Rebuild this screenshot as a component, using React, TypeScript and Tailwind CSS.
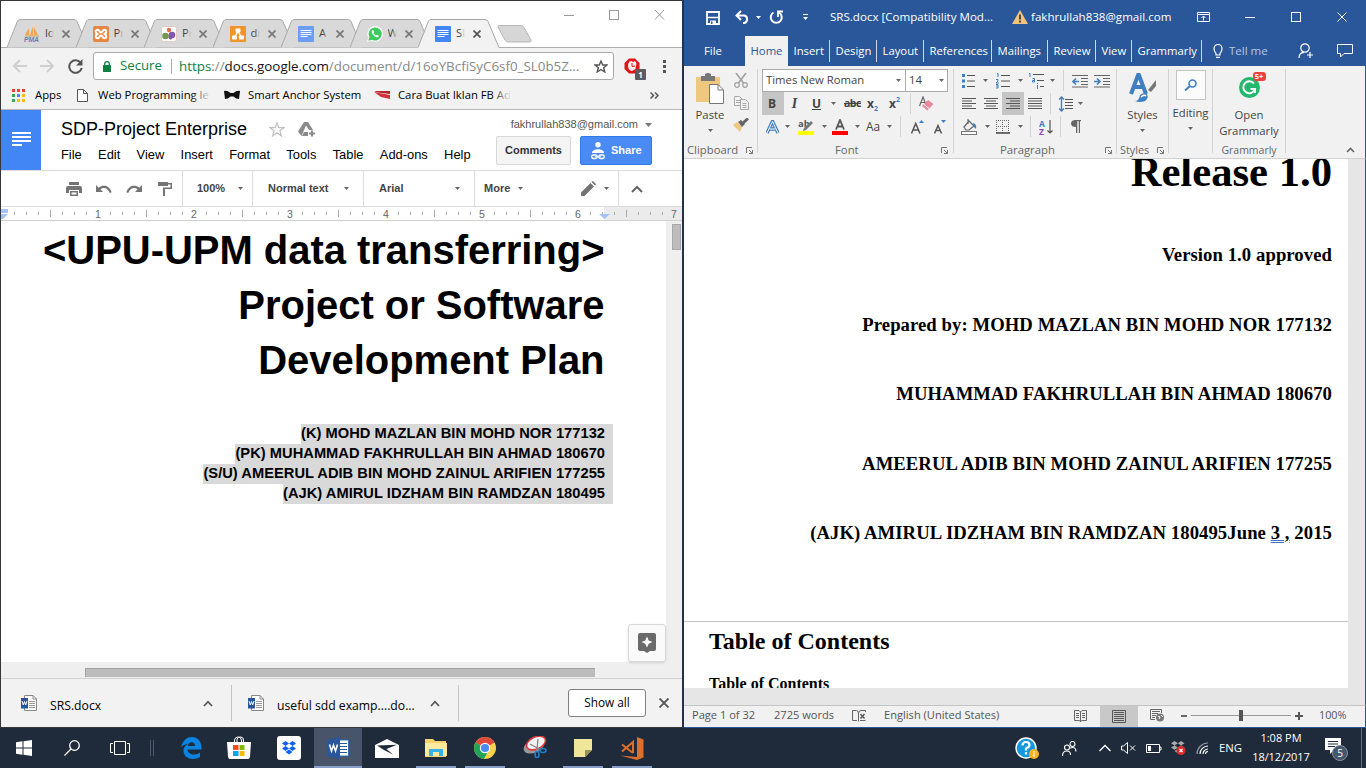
import React from "react";

type IconProps = { w: number; h: number; className?: string; children: React.ReactNode };

function Icon({ w, h, className = "", children }: IconProps) {
  return (
    <svg width={w} height={h} viewBox={`0 0 ${w} ${h}`} fill="none" className={`shrink-0 ${className}`}>
      {children}
    </svg>
  );
}

function Caret({ className = "", color = "#666" }: { className?: string; color?: string }) {
  return (
    <Icon w={5} h={3} className={className}>
      <path d="M0 0H5L2.5 3Z" fill={color} />
    </Icon>
  );
}

/* ---------- Chrome ---------- */

function DocsGlyph({ faded = false }: { faded?: boolean }) {
  return (
    <Icon w={16} h={16}>
      <rect width="16" height="16" rx="1" fill={faded ? "#6b9df5" : "#4285f4"} />
      <path d="M2.500 4.500h11M2.500 6.500h11M2.500 8.500h11M2.500 10.500h7" stroke="#fff" strokeWidth="1" />
    </Icon>
  );
}

const tabs = [
  {
    title: "lo",
    icon: (
      <Icon w={16} h={16}>
        <path d="M5 9V2L1 9ZM9 10V0L6 9ZM10 9V1l4 8Z" fill="#f3a44c" />
        <path d="M1 10h14" stroke="#c9a06c" />
        <text x="0" y="15.500" fontSize="6.500" fontWeight="bold" fontStyle="italic" fontFamily="Liberation Sans" fill="#6c78af" textLength="15" lengthAdjust="spacingAndGlyphs">PMA</text>
      </Icon>
    ),
  },
  {
    title: "Pr",
    icon: (
      <Icon w={16} h={16}>
        <rect width="16" height="16" rx="2" fill="#e58642" />
        <path d="M5.500 8C2 8 2 3.800 4.500 3.800C7 3.800 6 6.500 8 6.500C10 6.500 9 3.800 11.500 3.800C14 3.800 14 8 10.500 8C14 8 14 12.200 11.500 12.200C9 12.200 10 9.500 8 9.500C6 9.500 7 12.200 4.500 12.200C2 12.200 2 8 5.500 8Z" stroke="#fff" strokeWidth="2" />
      </Icon>
    ),
  },
  {
    title: "Pr",
    icon: (
      <Icon w={16} h={16}>
        <rect x="0.500" y="0.500" width="15" height="15" rx="2" fill="#fff" stroke="#e8c8c0" />
        <circle cx="8" cy="4" r="2.200" fill="#e66d4b" />
        <circle cx="4.500" cy="10" r="3.300" fill="#6d9a4f" />
        <circle cx="11" cy="9" r="3.300" fill="#8058a8" />
        <circle cx="9.500" cy="11.500" r="2" fill="#8058a8" />
      </Icon>
    ),
  },
  {
    title: "dr",
    icon: (
      <Icon w={16} h={16}>
        <rect width="16" height="16" rx="1" fill="#f0952c" />
        <path d="M8 5L4.500 11.500M8 5l3.500 6.500" stroke="#fff" strokeWidth="1.500" />
        <rect x="5.500" y="2.500" width="5" height="4" rx="1" fill="#fff" />
        <rect x="2" y="9.500" width="5" height="4" rx="1" fill="#fff" />
        <rect x="9" y="9.500" width="5" height="4" rx="1" fill="#fff" />
      </Icon>
    ),
  },
  { title: "A", icon: <DocsGlyph faded /> },
  {
    title: "W",
    icon: (
      <Icon w={16} h={16}>
        <path d="M0 16L1.300 11.500A7.800 7.800 0 1 1 4.600 14.800Z" fill="#fff" />
        <path d="M1.300 14.700L2.400 11A6.500 6.500 0 1 1 5 13.700Z" fill="#3ec95f" />
        <path d="M5.500 4C4 5 5 8 7 9.800C9 11.500 11.300 12 12 10L10 8.800L9 9.600C8 9.200 7 8.200 6.500 7L7.200 6.200L6.500 4.200Z" fill="#fff" />
      </Icon>
    ),
  },
  { title: "SD", icon: <DocsGlyph />, active: true },
];

function BrowserTab({ tab }: { tab: (typeof tabs)[number] & { active?: boolean } }) {
  const fill = tab.active ? "#f2f2f2" : "#d9d9d9";
  return (
    <div className={`relative mr-[-12.5px] flex h-[29px] w-[81px] items-center ${tab.active ? "z-10" : ""}`}>
      <svg className="absolute inset-0" width="81" height="29" viewBox="0 0 81 29">
        <path d="M0 28.500L10.500 2Q11.500 0.500 13 0.500H67Q69 0.500 70 2.500L81 28.500Z" fill={fill} />
        <path d="M0 28.500L10.500 2Q11.500 0.500 13 0.500H67Q69 0.500 70 2.500L81 28.500" fill="none" stroke="#a8a8a8" />
        {tab.active && <path d="M0.500 28.500H80.500" stroke="#f2f2f2" strokeWidth="1" />}
      </svg>
      <div className="relative ml-[17px] flex items-center">
        {tab.icon}
        <div className="relative ml-[5px] w-[9px] overflow-hidden text-[11.3px] text-[#444]">
          {tab.title}
          <div className={`absolute inset-y-0 right-0 w-[5px] bg-gradient-to-r ${tab.active ? "from-transparent to-[#f2f2f2]" : "from-transparent to-[#d9d9d9]"}`} />
        </div>
        <Icon w={8} h={8} className="ml-[8px]">
          <path d="M0.500 0.500L7.500 7.500M7.500 0.500L0.500 7.500" stroke={tab.active ? "#555" : "#777"} strokeWidth="1.700" />
        </Icon>
      </div>
    </div>
  );
}

function ChromeTabs() {
  return (
    <div className="flex h-[47px] border-b border-[#adadad] bg-white">
      <div className="mt-[18px] ml-[6px] flex h-[29px]">
        {tabs.map((t, i) => (
          <BrowserTab key={i} tab={t} />
        ))}
        <Icon w={36} h={18} className="mt-[6px] ml-[10px]">
          <path d="M1.500 0.500H24Q26 0.500 27 2.500L34 15Q34.500 17 33 17H11Q9 17 8 15L1 2Z" fill="#d6d6d6" stroke="#b8b8b8" />
        </Icon>
      </div>
      <Icon w={104} h={10} className="mt-[9px] ml-[29px]">
        <path d="M2 5.500H12" stroke="#999" />
        <rect x="47.500" y="0.500" width="9" height="9" stroke="#999" />
        <path d="M93 0L102 9.500M102 0L93 9.500" stroke="#999" />
      </Icon>
    </div>
  );
}

function ChromeToolbar() {
  return (
    <div className="flex h-[36px] items-center bg-[#f2f2f2]">
      <Icon w={15} h={14} className="ml-[11px]">
        <path d="M15 7H2M8 1L2 7L8 13" stroke="#cfcfcf" strokeWidth="2" />
      </Icon>
      <Icon w={15} h={14} className="ml-[13px]">
        <path d="M0 7H13M7 1L13 7L7 13" stroke="#cfcfcf" strokeWidth="2" />
      </Icon>
      <Icon w={15} h={15} className="ml-[13px]">
        <path d="M12.800 4A6.300 6.300 0 1 0 13.700 9" stroke="#555" strokeWidth="2" />
        <path d="M14.500 0V6.500H8Z" fill="#555" />
      </Icon>
      <div className="ml-[10px] flex h-[28px] w-[521px] shrink-0 items-center rounded-[3px] border border-[#a9a9a9] bg-white text-[13.2px]">
        <Icon w={8} h={11} className="ml-[9px]">
          <rect y="4" width="8" height="7" rx="0.500" fill="#0b8043" />
          <path d="M1.700 5V3A2.300 2.300 0 0 1 6.300 3V5" stroke="#0b8043" strokeWidth="1.300" />
        </Icon>
        <div className="ml-[9px] w-[41px]"><span className="text-[#0b8043]">Secure</span></div>
        <div className="ml-[10px] h-[15px] w-px bg-[#aaa]" />
        <div className="ml-[7px] w-[415px] text-[13.37px] text-[#888]">
          <span className="text-[#0b8043]">https</span>://<span className="text-[#111]">docs.google.com</span>/document/d/16oYBcfiSyC6sf0_SL0b5Z...
        </div>
        <Icon w={14} h={13}>
          <path d="M7 1L8.700 5H13L9.600 7.800L10.800 12L7 9.500L3.200 12L4.400 7.800L1 5H5.300Z" stroke="#555" strokeWidth="1.400" />
        </Icon>
      </div>
      <div className="relative ml-[10px] h-[22px] w-[23px]">
        <Icon w={16} h={16} className="mt-[3px]">
          <path d="M5 0.500H11L15.500 5V11L11 15.500H5L0.500 11V5Z" fill="#e0141c" />
          <path d="M5.500 3.500Q4 5 4 8.500Q4.500 12.500 8 13L11.500 11L12.500 5.500L11 3L9 4L7.500 3Z" fill="#f8eeee" />
          <path d="M8 5V8.500L11 8" stroke="#e0141c" strokeWidth="1" />
        </Icon>
        <div className="absolute top-[14px] left-[11px] flex h-[11px] w-[11px] items-center justify-center rounded-[1px] bg-[#5c5c5c] text-[8px] font-bold text-white">1</div>
      </div>
      <Icon w={3} h={13} className="ml-[16px]">
        <path d="M0 0H3V3H0ZM0 5H3V8H0ZM0 10H3V13H0Z" fill="#555" />
      </Icon>
    </div>
  );
}

function FadeText({ className = "", children }: { className?: string; children: React.ReactNode }) {
  return (
    <div className={`relative w-[113px] overflow-hidden ${className}`}>
      {children}
      <div className="absolute inset-y-0 right-0 w-[20px] bg-gradient-to-r from-transparent to-[#f2f2f2]" />
    </div>
  );
}

function Bookmarks() {
  const colors = ["#ea4335", "#ea4335", "#ea4335", "#34a853", "#4285f4", "#fbbc05", "#34a853", "#fbbc05", "#fbbc05"];
  return (
    <div className="flex h-[26px] items-center border-b border-[#b6b6b6] bg-[#f2f2f2] pb-[3px] text-[11.3px] text-black">
      <Icon w={13} h={13} className="ml-[11px]">
        {colors.map((c, i) => (
          <rect key={i} x={(i % 3) * 5} y={Math.floor(i / 3) * 5} width="3" height="3" fill={c} />
        ))}
      </Icon>
      <div className="ml-[10px] w-[26px]">Apps</div>
      <Icon w={11} h={13} className="ml-[16px]">
        <path d="M0.500 0.500H6.500L10.500 4.500V12.500H0.500ZM6.500 0.500V4.500H10.500" fill="#fff" stroke="#555" />
      </Icon>
      <FadeText className="ml-[10px]">Web Programming le</FadeText>
      <Icon w={16} h={10} className="ml-[13px]">
        <path d="M0 1Q3 0 6.500 3H9.500Q13 0 16 1L15 9Q12 9 9.500 6.500H6.500Q4 9 1 9Z" fill="#111" />
      </Icon>
      <div className="ml-[8px] w-[113px]">Smart Anchor System</div>
      <Icon w={16} h={8} className="ml-[13px]">
        <path d="M0 0H16V3L4 1.500Z" fill="#b3202a" />
        <path d="M0 1L16 4V8L7 6Z" fill="#d3303a" />
      </Icon>
      <FadeText className="ml-[8px]">Cara Buat Iklan FB Ad</FadeText>
      <Icon w={9} h={7} className="ml-[139px]">
        <path d="M0.500 0.500L3.500 3.500L0.500 6.500M5 0.500L8 3.500L5 6.500" stroke="#555" strokeWidth="1.500" />
      </Icon>
    </div>
  );
}

function DocsHeader() {
  return (
    <div className="flex h-[60px] bg-white font-['Liberation_Sans',sans-serif]">
      <div className="w-[40px] shrink-0 bg-[#4285f4]">
        <Icon w={20} h={14} className="mt-[22px] ml-[11px]">
          <path d="M0 1H19M0 5H19M0 9H19M0 13H10" stroke="#fff" strokeWidth="1.900" />
        </Icon>
      </div>
      <div className="ml-[20px] w-[435px] shrink-0">
        <div className="mt-[9px] flex h-[20px] items-center text-[18px]">
          <div className="w-[186px] shrink-0">SDP-Project Enterprise</div>
          <Icon w={16} h={15} className="ml-[22px]">
            <path d="M8 1L9.800 5.700H15L10.900 8.800L12.400 14L8 10.800L3.600 14L5.100 8.800L1 5.700H6.200Z" stroke="#c0c0c0" strokeWidth="1.200" />
          </Icon>
          <Icon w={18} h={15} className="ml-[13px]">
            <path d="M6 0H10L15 8H11L8 3.500L3.500 14L0 9.500Z" fill="#8a8a8a" />
            <path d="M4 14L6 10H10V14Z" fill="#8a8a8a" />
            <path d="M11 11.500H17M14 8.500V14.500" stroke="#8a8a8a" strokeWidth="2" />
          </Icon>
        </div>
        <div className="mt-[7px] flex h-[17px] items-center gap-[16.3px] text-[12.9px]">
          {["File", "Edit", "View", "Insert", "Format", "Tools", "Table", "Add-ons", "Help"].map((m) => (
            <span key={m}>{m}</span>
          ))}
        </div>
      </div>
      <div className="flex w-[156px] flex-col">
        <div className="mt-[6px] flex h-[17px] items-center justify-end text-[11px] text-[#555]">
          fakhrullah838@gmail.com
          <Icon w={7} h={4} className="ml-[7px]">
            <path d="M0 0H7L3.500 4Z" fill="#777" />
          </Icon>
        </div>
        <div className="mt-[3px] flex text-[11px] font-bold">
          <div className="flex h-[29px] w-[75px] items-center justify-center rounded-[2px] border border-[#d8d8d8] bg-[#f4f4f4] text-[#333]">Comments</div>
          <div className="ml-[9px] flex h-[29px] w-[72px] items-center rounded-[2px] border border-[#3079ed] bg-[#4a8af4] text-white">
            <Icon w={14} h={18} className="ml-[10px]">
              <circle cx="7" cy="2.700" r="2.700" fill="#fff" />
              <path d="M1 11C1 6 13 6 13 11Z" fill="#fff" />
              <rect x="0.700" y="13" width="5.500" height="3.500" rx="1.700" stroke="#fff" strokeWidth="1.300" />
              <rect x="7.800" y="13" width="5.500" height="3.500" rx="1.700" stroke="#fff" strokeWidth="1.300" />
              <path d="M4 14.800H10" stroke="#fff" />
            </Icon>
            <span className="ml-[6px]">Share</span>
          </div>
        </div>
      </div>
    </div>
  );
}

function DocsToolbar() {
  const sep = "h-[36px] w-px shrink-0 bg-[#dcdcdc]";
  return (
    <div className="flex h-[37px] items-center border-y border-[#dcdcdc] bg-white font-['Liberation_Sans',sans-serif] text-[11px] font-bold text-[#444]">
      <Icon w={16} h={14} className="ml-[65px]">
        <path d="M3 0H13V3H3ZM2 4H14Q16 4 16 6V11H13V8H3V11H0V6Q0 4 2 4ZM4 9H12V14H4Z" fill="#747474" />
        <path d="M5.500 10.500H10.500V12.500H5.500Z" fill="#fff" />
      </Icon>
      <Icon w={16} h={8} className="ml-[14px]">
        <path d="M0 0V7H7L4.300 4.300C8 1.500 12 3.500 13.800 8L15.700 7.300C13 0 7 -0.500 2.700 2.700Z" fill="#747474" />
      </Icon>
      <Icon w={16} h={8} className="ml-[14px]">
        <path d="M16 0V7H9L11.700 4.300C8 1.500 4 3.500 2.200 8L0.300 7.300C3 0 9 -0.500 13.300 2.700Z" fill="#747474" />
      </Icon>
      <Icon w={14} h={14} className="ml-[16px]">
        <path d="M0 0H10V1H14V7H7V14H5V5.500H12.500V2.500H10V4H0Z" fill="#747474" />
      </Icon>
      <div className={`${sep} ml-[10px]`} />
      <div className="ml-[14px] w-[41px]">100%</div>
      <Caret />
      <div className={`${sep} ml-[9px]`} />
      <div className="ml-[15px] w-[76px]">Normal text</div>
      <Caret />
      <div className={`${sep} ml-[14px]`} />
      <div className="ml-[15px] w-[76px]">Arial</div>
      <Caret />
      <div className={`${sep} ml-[14px]`} />
      <div className="ml-[9px] w-[34px]">More</div>
      <Caret />
      <Icon w={15} h={15} className="ml-[58px]">
        <path d="M0 15V11.500L9.500 2L13 5.500L3.500 15ZM10.500 1L12 0L15 3L14 4.500Z" fill="#747474" />
      </Icon>
      <Caret className="ml-[8px]" />
      <div className={`${sep} ml-[9px]`} />
      <Icon w={12} h={8} className="ml-[12px]">
        <path d="M1 7L6 2L11 7" stroke="#666" strokeWidth="2" />
      </Icon>
    </div>
  );
}

function Ruler() {
  const ticks = Array.from({ length: 56 }, (_, i) => i + 1);
  return (
    <div className="h-[14px] border-b border-[#d0d0d0]">
      <svg width="681" height="13" viewBox="1 0 681 13">
        <rect width="604" height="13" x="0" fill="#fff" />
        <rect x="604" width="80" height="13" fill="#ebebeb" />
        {ticks.map((i) => {
          const x = 2 + i * 12;
          if (i % 8 === 0)
            return (
              <text key={i} x={x} y="10.500" textAnchor="middle" fontSize="10.500" fontFamily="Liberation Sans" fill="#666">{i / 8}</text>
            );
          return <rect key={i} x={x} y={i % 4 === 0 ? 3 : 5} width="1" height={i % 4 === 0 ? 7 : 3} fill="#aaa" />;
        })}
        <path d="M1 2H8V6H1ZM1 7H8L3 12H1Z" fill="#a4c2f4" />
        <path d="M599 7H610L604.500 12Z" fill="#a4c2f4" />
      </svg>
    </div>
  );
}

function WordFile({ className = "" }: { className?: string }) {
  return (
    <Icon w={16} h={16} className={className}>
      <path d="M3.500 0.500H12L15.500 4V15.500H3.500Z" fill="#fff" stroke="#888" />
      <path d="M12 0.500V4H15.500" stroke="#888" />
      <path d="M8 6.500H14M8 8.500H14M8 10.500H14M8 12.500H14" stroke="#999" />
      <path d="M0 3H7V13.500H0Z" fill="#2a5699" />
      <path d="M1 6L2.300 10L3.500 6.500L4.700 10L6 6" stroke="#fff" />
    </Icon>
  );
}

function DocsCanvas() {
  return (
    <div className="flex h-[441px] bg-white font-['Liberation_Sans',sans-serif] font-bold text-black">
      <div className="relative w-[665px] shrink-0">
        <div className="mt-[2px] w-[603.5px] text-right text-[40px] leading-[55px] tracking-[-0.03px]">
          <div>&lt;UPU-UPM data transferring&gt;</div>
          <div>Project or Software</div>
          <div>Development Plan</div>
        </div>
        <div className="mt-[36px] flex w-[612px] flex-col items-end text-[14.67px] leading-[18px] tracking-[0.03px]">
          {[
            "(K) MOHD MAZLAN BIN MOHD NOR 177132",
            "(PK) MUHAMMAD FAKHRULLAH BIN AHMAD 180670",
            "(S/U) AMEERUL ADIB BIN MOHD ZAINUL ARIFIEN 177255",
            "(AJK) AMIRUL IDZHAM BIN RAMDZAN 180495",
          ].map((l) => (
            <div key={l} className="h-[20px] bg-[#d9d9d9] pr-[8px]">{l}</div>
          ))}
        </div>
        <div className="absolute right-0 bottom-0 flex h-[38px] w-[38px] items-center justify-center rounded-[3px] border border-[#d8d8d8] bg-[#fafafa] shadow-sm">
          <Icon w={18} h={20}>
            <path d="M2 0H16Q18 0 18 2V16Q18 18 16 18H12L9 20L6 18H2Q0 18 0 16V2Q0 0 2 0Z" fill="#6b6b6b" />
            <path d="M9 3.500L10.700 7.500L14.500 9L10.700 10.700L9 14.500L7.300 10.700L3.500 9L7.300 7.500Z" fill="#fff" />
          </Icon>
        </div>
      </div>
      <div className="flex-1 bg-[#efefef] pt-[3px] pl-[6px]">
        <div className="h-[26px] w-[9px] border border-[#a8a8a8] bg-[#bcbcbc]" />
      </div>
    </div>
  );
}

function Chevron({ className }: { className: string }) {
  return (
    <Icon w={10} h={7} className={className}>
      <path d="M1 6L5 1.700L9 6" stroke="#555" strokeWidth="1.700" />
    </Icon>
  );
}

function ChromeWindow() {
  return (
    <div className="flex h-[728px] w-[684px] shrink-0 flex-col border-t border-r-2 border-b border-l border-[#35363a] border-r-[#26324a] bg-[#f2f2f2]">
      <ChromeTabs />
      <ChromeToolbar />
      <Bookmarks />
      <DocsHeader />
      <DocsToolbar />
      <Ruler />
      <DocsCanvas />
      <div className="h-[17px] border-b border-[#d2d2d2] bg-[#efefef] pt-[6px]">
        <div className="ml-[84px] h-[9px] w-[510px] border-t border-l border-[#a0a0a0] bg-[#bcbcbc]" />
      </div>
      <div className="flex h-[48px] items-center pb-px text-[12.2px] text-black">
        <WordFile className="ml-[20px]" />
        <div className="mt-[7px] ml-[13px] w-[153px]">SRS.docx</div>
        <Chevron className="mt-px" />
        <div className="ml-[18px] h-[36px] w-px bg-[#c4c4c4]" />
        <WordFile className="ml-[16px]" />
        <div className="mt-[7px] ml-[13px] w-[153px]">useful sdd examp....do...</div>
        <Chevron className="mt-px" />
        <div className="ml-[18px] h-[36px] w-px bg-[#c4c4c4]" />
        <div className="mt-px ml-[109px] flex h-[28px] w-[78px] items-center justify-center rounded-[3px] border border-[#808080] bg-white pb-px text-[11.8px]">Show all</div>
        <Icon w={10} h={10} className="ml-[13px]">
          <path d="M0.500 0.500L9.500 9.500M9.500 0.500L0.500 9.500" stroke="#555" strokeWidth="1.900" />
        </Icon>
      </div>
    </div>
  );
}

/* ---------- Word ---------- */

function WordTitleBar() {
  return (
    <div className="flex h-[36px] items-center pb-[2px] text-[11.57px] text-white">
      <Icon w={14} h={14} className="mt-[2px] ml-[22px]">
        <path d="M1 1H13V13H1Z" stroke="#fff" strokeWidth="1.800" />
        <path d="M1 6.500H13" stroke="#fff" strokeWidth="1.500" />
        <path d="M4 9.500H10V13H4Z" fill="#fff" />
        <path d="M5 10.500H6.500V13H5Z" fill="#2a579a" />
      </Icon>
      <Icon w={15} h={14} className="ml-[15px]">
        <path d="M6 1L1.500 5.500L6 10M2 5.500H9.500A4 4 0 0 1 9.500 13H8" stroke="#fff" strokeWidth="2" />
      </Icon>
      <Caret color="#fff" className="ml-[6px]" />
      <Icon w={15} h={14} className="ml-[8px]">
        <path d="M4.500 2.500A5.500 5.500 0 1 0 10 2.500" stroke="#fff" strokeWidth="2" />
        <path d="M14 1.500H9V7" stroke="#fff" strokeWidth="1.800" />
      </Icon>
      <Icon w={5} h={7} className="ml-[19px]">
        <path d="M0 0.500H5" stroke="#fff" />
        <path d="M0 3H5L2.500 6Z" fill="#fff" />
      </Icon>
      <div className="ml-[22px] w-[182px] shrink-0">SRS.docx [Compatibility Mod...</div>
      <Icon w={16} h={14}>
        <path d="M8 0L16 14H0Z" fill="#f0c47e" />
        <path d="M8 4.500V9.500M8 10.500V12.500" stroke="#333" strokeWidth="1.700" />
      </Icon>
      <div className="ml-[3px] w-[166px] shrink-0">fakhrullah838@gmail.com</div>
      <Icon w={13} h={10}>
        <path d="M0.500 0.500H12.500V9.500H0.500ZM0.500 2.500H12.500M6.500 8.500V4M4.500 6L6.500 4L8.500 6" stroke="#fff" />
      </Icon>
      <Icon w={104} h={10} className="ml-[34px]">
        <path d="M1 5.500H11" stroke="#fff" />
        <rect x="47.500" y="0.500" width="9" height="9" stroke="#fff" />
        <path d="M93.500 0.500L102.500 9.500M102.500 0.500L93.500 9.500" stroke="#fff" />
      </Icon>
    </div>
  );
}

function WordTabs() {
  const tab = "flex h-[22px] shrink-0 items-center border-r border-[#cdd8e8] pl-[5.5px]";
  return (
    <div className="flex h-[30px] items-center text-[11.3px] text-white">
      <div className="ml-[20px] w-[41px] shrink-0">File</div>
      <div className="flex h-[30px] w-[43px] shrink-0 items-center justify-center bg-[#f1f1f1] text-[#2a579a]">Home</div>
      <div className={`${tab} w-[42px]`}>Insert</div>
      <div className={`${tab} w-[47px]`}>Design</div>
      <div className={`${tab} w-[47px]`}>Layout</div>
      <div className={`${tab} w-[68px]`}>References</div>
      <div className={`${tab} w-[56px]`}>Mailings</div>
      <div className={`${tab} w-[48px]`}>Review</div>
      <div className={`${tab} w-[36px]`}>View</div>
      <div className={`${tab} w-[70px]`}>Grammarly</div>
      <Icon w={10} h={14} className="ml-[11px]">
        <path d="M3 9.500Q1 7.500 1 4.500A4 4 0 0 1 9 4.500Q9 7.500 7 9.500V11H3ZM3 13.300H7" stroke="#fff" strokeWidth="1.200" />
      </Icon>
      <div className="ml-[6px] w-[69px] shrink-0 text-[11.5px] text-[#b8c8e0]">Tell me</div>
      <Icon w={16} h={16}>
        <circle cx="7" cy="5" r="4.200" stroke="#fff" strokeWidth="1.200" />
        <path d="M1 15Q1 9.500 6 9.300M9 12H15M12 9V15" stroke="#fff" strokeWidth="1.200" />
      </Icon>
      <Icon w={16} h={14} className="ml-[23px]">
        <path d="M0.500 0.500H15.500V9.500H7L3.500 13V9.500H0.500Z" stroke="#fff" />
      </Icon>
    </div>
  );
}

function Launcher({ className = "" }: { className?: string }) {
  return (
    <Icon w={7} h={7} className={className}>
      <path d="M0.500 6V0.500H6M3 3L6.500 6.500M6.500 3V6.500H3" stroke="#777" />
    </Icon>
  );
}

function Lines({ widths, right = false, left = false }: { widths: number[]; right?: boolean; left?: boolean }) {
  return (
    <Icon w={14} h={13}>
      {widths.map((w, i) => (
        <rect key={i} x={right ? 14 - w : left ? 0 : (14 - w) / 2} y={1 + i * 2.5} width={w} height="1" fill="#555" />
      ))}
    </Icon>
  );
}

const ribbonGroup = "flex h-[84px] shrink-0 flex-col border-r border-[#d2d2d2]";
const ribbonLabel = "mt-[4px] flex h-[16px] shrink-0 items-center text-[11.3px] text-[#666]";

function Clipboard() {
  return (
    <div className={`${ribbonGroup} w-[74px]`}>
      <div className="flex h-[69px] shrink-0">
        <div className="ml-[11px] flex w-[30px] flex-col items-center text-[11.3px] text-[#444]">
          <Icon w={30} h={32} className="mt-[4px]">
            <path d="M1 4H25V29H1Z" fill="#edc87e" />
            <path d="M6 3H10V1Q13 -1 16 1V3H20V8H6Z" fill="#777" />
            <path d="M14.500 11.500H23L28.500 17V30.500H14.500Z" fill="#fff" stroke="#777" />
            <path d="M23 11.500V17H28.500" stroke="#777" />
          </Icon>
          <span className="leading-[19px]">Paste</span>
          <Caret className="mt-[5px]" />
        </div>
        <div className="ml-[7px] flex w-[18px] flex-col items-center">
          <Icon w={14} h={15} className="mt-[4px]">
            <path d="M2 0L9.500 10M12 0L4.500 10" stroke="#a0a0a0" strokeWidth="1.600" />
            <circle cx="3" cy="12" r="2.300" stroke="#a0a0a0" strokeWidth="1.200" />
            <circle cx="11" cy="12" r="2.300" stroke="#a0a0a0" strokeWidth="1.200" />
          </Icon>
          <Icon w={15} h={14} className="mt-[8px]">
            <path d="M0.500 0.500H5.500L8.500 3.500V9.500H0.500ZM2 4.500H6M2 6.500H6" stroke="#a8a8a8" />
            <path d="M6.500 3.500H11.500L14.500 6.500V13.500H6.500Z" fill="#f1f1f1" stroke="#a8a8a8" />
            <path d="M8.500 7.500H12.500M8.500 9.500H12.500M8.500 11.500H12.500" stroke="#a8a8a8" />
          </Icon>
          <Icon w={16} h={15} className="mt-[8px]">
            <path d="M0 7L4 4L9 9L7 14Z" fill="#edc87e" />
            <path d="M5 4L8 2L12 6L9 9Z" fill="#666" />
            <path d="M10 5L15 0.500" stroke="#666" strokeWidth="3" />
          </Icon>
        </div>
      </div>
      <div className={ribbonLabel}>
        <span className="ml-[3px] w-[59px] shrink-0">Clipboard</span>
        <Launcher />
      </div>
    </div>
  );
}

function FontGroup() {
  return (
    <div className={`${ribbonGroup} w-[196px] text-[#444]`}>
      <div className="ml-[4px] flex h-[23px] shrink-0 text-[11.3px]">
        <div className="flex h-[23px] w-[144px] items-center border border-[#ababab] bg-white">
          <span className="ml-[3px] w-[130px] shrink-0">Times New Roman</span>
          <Caret />
        </div>
        <div className="ml-[-1px] flex h-[23px] w-[43px] items-center border border-[#ababab] bg-white">
          <span className="ml-[3px] w-[30px] shrink-0">14</span>
          <Caret />
        </div>
      </div>
      <div className="ml-[4px] flex h-[23px] shrink-0 items-center text-[14px]">
        <div className="flex h-[23px] w-[22px] shrink-0 items-center justify-center bg-[#c5c5c5] pr-[2px] text-[12px] font-bold">B</div>
        <div className="ml-[4px] w-[13px] text-center font-['Liberation_Serif',serif] font-bold italic">I</div>
        <div className="ml-[11px] w-[9px] text-[12px] font-bold underline">U</div>
        <Caret className="ml-[10px]" />
        <div className="ml-[8px] w-[18px] text-[10.5px] font-bold tracking-[-0.5px] line-through">abc</div>
        <div className="ml-[5px] flex w-[13px] items-center text-[12px] leading-none font-bold">
          x<span className="mt-[9px] text-[7px] text-[#3f7fc1]">2</span>
        </div>
        <div className="ml-[9px] flex w-[13px] items-center text-[12px] leading-none font-bold">
          x<span className="mb-[9px] text-[7px] text-[#3f7fc1]">2</span>
        </div>
        <div className="ml-[8px] h-[21px] w-px bg-[#d2d2d2]" />
        <Icon w={15} h={15} className="ml-[8px]">
          <path d="M0.500 10L4 1L7.500 10M2 6.500H6" stroke="#666" strokeWidth="1.200" />
          <path d="M3 10L9 4L14.500 8L8.500 14.500Z" fill="#e8899a" />
          <path d="M5 8.500L10 12.500" stroke="#fff" />
        </Icon>
      </div>
      <div className="ml-[4px] flex h-[23px] shrink-0 items-center text-[13px]">
        <Icon w={14} h={14} className="ml-[4px]">
          <path d="M1 13L6.500 1.500L12 13M3.500 9H9.500" stroke="#3f7fc1" strokeWidth="3.400" />
          <path d="M1 13L6.500 1.500L12 13M3.500 9H9.500" stroke="#fff" strokeWidth="1" />
        </Icon>
        <Caret className="ml-[5px]" />
        <Icon w={16} h={16} className="ml-[8px]">
          <text x="0" y="8" fontSize="9.500" fontWeight="bold" fontFamily="Open Sans" fill="#555">ab</text>
          <path d="M6 9L13 2L15 4L8 11L5 12Z" fill="#777" />
          <rect y="12" width="16" height="4" fill="#ffff00" />
        </Icon>
        <Caret className="ml-[8px]" />
        <Icon w={16} h={16} className="ml-[5px]">
          <path d="M4 10.500L8 1L12 10.500M5.500 7.500H10.500" stroke="#555" strokeWidth="1.800" />
          <rect y="12" width="16" height="4" fill="#f00" />
        </Icon>
        <Caret className="ml-[7px]" />
        <div className="ml-[6px] w-[17px] text-[11.8px]">Aa</div>
        <Caret className="ml-[4px]" />
        <div className="ml-[8px] h-[21px] w-px bg-[#d2d2d2]" />
        <Icon w={13} h={14} className="ml-[10px]">
          <path d="M0.500 13.500L4.700 3.500L9 13.500M2.200 10H7.200" stroke="#555" strokeWidth="1.500" />
          <path d="M8 3H13L10.500 0Z" fill="#3f7fc1" />
        </Icon>
        <Icon w={13} h={14} className="ml-[10px]">
          <path d="M0.500 13.500L4 5.500L7.500 13.500M2 10.500H6" stroke="#555" strokeWidth="1.500" />
          <path d="M7 0H12L9.500 3Z" fill="#3f7fc1" />
        </Icon>
      </div>
      <div className={ribbonLabel}>
        <span className="ml-[77px] w-[106px] shrink-0">Font</span>
        <Launcher />
      </div>
    </div>
  );
}

function ListIcon({ kind }: { kind: "bullet" | "number" | "multi" }) {
  return (
    <Icon w={16} h={16}>
      {kind === "bullet" && (
        <>
          <path d="M0 1H3V4H0ZM0 6.500H3V9.500H0ZM0 12H3V15H0Z" fill="#3f7fc1" />
          <path d="M5 2.500H13M5 8H13M5 13.500H13" stroke="#555" />
        </>
      )}
      {kind === "number" && (
        <>
          <path d="M1 0.500H2V4M0 6.500H2V8L0 10H3M0 11.500H2V15H0M0 13H2" stroke="#3f7fc1" />
          <path d="M5 2.500H14M5 8H14M5 13.500H14" stroke="#555" />
        </>
      )}
      {kind === "multi" && (
        <>
          <path d="M1 0.500H2V4M4.500 5.500H6.500V9H4.500V7.500H6M9.500 10V11M9.500 12V16" stroke="#3f7fc1" />
          <path d="M5 1.500H16M9 7.500H16M12 13.500H16" stroke="#555" />
        </>
      )}
    </Icon>
  );
}

function Indent({ left = false, className = "" }: { left?: boolean; className?: string }) {
  return (
    <Icon w={16} h={14} className={className}>
      <path d="M0 1.500H16M9 4.500H16M9 7.500H16M9 10.500H16M0 13H16" stroke="#666" />
      {left ? (
        <path d="M1 7.500H7M4 4.500L1 7.500L4 10.500" stroke="#3f7fc1" strokeWidth="1.600" />
      ) : (
        <path d="M0 7.500H6M3 4.500L6 7.500L3 10.500" stroke="#3f7fc1" strokeWidth="1.600" />
      )}
    </Icon>
  );
}

function ParagraphGroup() {
  const sep = "h-[21px] w-px shrink-0 bg-[#d2d2d2]";
  return (
    <div className={`${ribbonGroup} w-[163px]`}>
      <div className="ml-[8px] flex h-[23px] shrink-0 items-center">
        <ListIcon kind="bullet" />
        <Caret className="ml-[5px]" />
        <div className="w-[8px]" />
        <ListIcon kind="number" />
        <Caret className="ml-[6px]" />
        <div className="w-[5px]" />
        <ListIcon kind="multi" />
        <Caret className="ml-[6px]" />
        <div className={`${sep} ml-[8px]`} />
        <Indent left className="ml-[8px]" />
        <Indent className="ml-[6px]" />
      </div>
      <div className="ml-[8px] flex h-[23px] shrink-0 items-center">
        <Lines widths={[14, 10, 14, 10, 14]} left />
        <div className="w-[8px]" />
        <Lines widths={[14, 10, 14, 10, 14]} />
        <div className="ml-[4px] flex h-[23px] w-[22px] items-center justify-center bg-[#c5c5c5]">
          <Lines widths={[14, 10, 14, 10, 14]} right />
        </div>
        <div className="w-[4px]" />
        <Lines widths={[14, 14, 14, 14, 14]} />
        <div className={`${sep} ml-[8px]`} />
        <Icon w={14} h={16} className="ml-[8px]">
          <path d="M2.500 1V15M0 3.500L2.500 1L5 3.500M0 12.500L2.500 15L5 12.500" stroke="#3f7fc1" strokeWidth="1.400" />
          <path d="M6 3.500H14M6 6.500H14M6 9.500H14M6 12.500H14" stroke="#555" />
        </Icon>
        <Caret className="ml-[5px]" />
      </div>
      <div className="ml-[7px] flex h-[23px] shrink-0 items-center">
        <Icon w={17} h={16}>
          <path d="M3 8L8 2L13 7L8 11H5ZM7 0V5" stroke="#666" strokeWidth="1.200" />
          <path d="M12 4Q16 5 15 10L13 8Z" fill="#3f7fc1" />
          <rect x="0.500" y="12.500" width="15" height="3" fill="#fff" stroke="#777" />
        </Icon>
        <Caret className="ml-[7px]" />
        <Icon w={14} h={14} className="ml-[6px]">
          <path d="M0 0.500H13M0 6.500H13M0.500 0V13M6.500 0V13M12.500 0V13" stroke="#666" strokeDasharray="1 1" />
          <path d="M0 13H14" stroke="#444" strokeWidth="1.500" />
        </Icon>
        <Caret className="ml-[8px]" />
        <div className={`${sep} ml-[7px]`} />
        <Icon w={14} h={16} className="ml-[8px]">
          <text x="0" y="7.500" fontSize="8.500" fontWeight="bold" fontFamily="Open Sans" fill="#3f7fc1">A</text>
          <text x="0" y="16" fontSize="8.500" fontWeight="bold" fontFamily="Open Sans" fill="#8e4eb0">Z</text>
          <path d="M11 1V14M8.500 11.500L11 14L13.500 11.500" stroke="#555" strokeWidth="1.200" />
        </Icon>
        <div className={`${sep} ml-[7px]`} />
        <Icon w={10} h={13} className="ml-[10px]">
          <path d="M4.500 0H10V1.200H9V13H7.800V1.200H6.300V13H5V7Q0 7 0 3.500Q0 0 4.500 0Z" fill="#666" />
        </Icon>
      </div>
      <div className={ribbonLabel}>
        <span className="ml-[46px] w-[105px] shrink-0">Paragraph</span>
        <Launcher />
      </div>
    </div>
  );
}

function Ribbon() {
  return (
    <div className="flex h-[93px] border-r border-b border-r-[#2a579a] border-b-[#d0d0d0] bg-[#f1f1f1] pt-[3px] text-[11.3px] text-[#444]">
      <Clipboard />
      <FontGroup />
      <ParagraphGroup />
      <div className={`${ribbonGroup} w-[52px]`}>
        <div className="flex h-[69px] shrink-0 flex-col items-center">
          <Icon w={28} h={30} className="mt-[4px]">
            <path d="M2 21L9.500 1L17 21M5 14H14" stroke="#3f7fc1" strokeWidth="4" />
            <path d="M27 7L19 17L22 19L27 13Z" fill="#777" />
            <path d="M6 28Q10 28 11 22Q14 19 18 21Q20 25 16 28Q11 30 6 28Z" fill="#3f7fc1" />
            <path d="M12 24Q15 21 17 23" stroke="#fff" strokeWidth="1.500" />
          </Icon>
          <span className="mt-[2px] leading-[19px]">Styles</span>
          <Caret className="mt-[5px]" />
        </div>
        <div className={ribbonLabel}>
          <span className="ml-[3px] w-[37px] shrink-0 text-[10.8px]">Styles</span>
          <Launcher />
        </div>
      </div>
      <div className={`${ribbonGroup} w-[44px] items-center`}>
        <div className="mt-px flex h-[30px] w-[30px] shrink-0 items-center justify-center border border-[#c4c4c4] bg-[#fbfbfb]">
          <Icon w={13} h={12}>
            <circle cx="8.500" cy="4.500" r="3.500" stroke="#3f7fc1" strokeWidth="1.600" />
            <path d="M6 7L1 11.500" stroke="#3f7fc1" strokeWidth="2" />
          </Icon>
        </div>
        <span className="mt-[3px] leading-[19px]">Editing</span>
        <Caret className="mt-[5px]" />
      </div>
      <div className={`${ribbonGroup} w-[73px] items-center`}>
        <div className="relative mt-[8px] h-[21px] w-[21px] shrink-0">
          <Icon w={21} h={21}>
            <circle cx="10.500" cy="10.500" r="10.500" fill="#25b76d" />
            <path d="M15 6.500A6 6 0 1 0 16 12H11.500M16 12V16" stroke="#fff" strokeWidth="1.900" />
          </Icon>
          <div className="absolute -top-[5px] left-[14px] flex h-[9px] w-[13px] items-center justify-center rounded-[3px] bg-[#e8443f] text-[7.5px] leading-none font-bold text-white">5+</div>
        </div>
        <span className="mt-[9px] shrink-0 leading-[16px]">Open</span>
        <span className="shrink-0 leading-[16px]">Grammarly</span>
        <span className="mt-[3px] shrink-0 text-[10.5px] leading-[16px] text-[#666]">Grammarly</span>
      </div>
      <div className="flex flex-1 items-end justify-end">
        <Icon w={9} h={6} className="mr-[10px] mb-[5px]">
          <path d="M1 5L4.500 1.500L8 5" stroke="#666" strokeWidth="1.600" />
        </Icon>
      </div>
    </div>
  );
}

function WordPage() {
  return (
    <div className="flex h-[546px] border-r border-[#2a579a] bg-[#e6e6e6] font-['Liberation_Serif',serif] font-bold text-black">
      <div className="h-[529px] w-[664px] overflow-hidden bg-white">
        <div className="h-[476px] border-b border-[#c3c3c3] pr-[16px] text-right text-[18.67px] tracking-[0.08px]">
          <div className="mt-[-13px] h-[48px] text-[42.67px] leading-[52px] tracking-normal">Release 1.0</div>
          <div className="pt-[26px] leading-[69.5px]">
            <div>Version 1.0 approved</div>
            <div>Prepared by: MOHD MAZLAN BIN MOHD NOR 177132</div>
            <div>MUHAMMAD FAKHRULLAH BIN AHMAD 180670</div>
            <div>AMEERUL ADIB BIN MOHD ZAINUL ARIFIEN 177255</div>
            <div>
              (AJK) AMIRUL IDZHAM BIN RAMDZAN 180495June <span className="underline decoration-[#3f6fc8] decoration-double decoration-1">3 ,</span> 2015
            </div>
          </div>
        </div>
        <div className="ml-[25px] pt-[4px] text-[24px] leading-[30px]">Table of Contents</div>
        <div className="ml-[25px] pt-[18px] text-[16px] leading-[20px]">Table of Contents</div>
      </div>
    </div>
  );
}

function StatusBar() {
  return (
    <div className="flex h-[23px] items-center border-t border-r border-b border-t-[#c4c4c4] border-r-[#2a579a] border-b-[#2a579a] bg-[#f1f1f1] pb-[2px] text-[11.1px] text-[#555]">
      <span className="ml-[8px] w-[82px] shrink-0">Page 1 of 32</span>
      <span className="w-[78px] shrink-0">2725 words</span>
      <Icon w={14} h={12}>
        <path d="M5 10.500H0.500V0.500H4.500Q6.500 1 6.500 3V11.500M6.500 3Q7 0.500 9 0.500H13.500V2M8 10.500H13.500" stroke="#666" />
        <path d="M8.500 4L12.500 8.500M12.500 4L8.500 8.500" stroke="#555" strokeWidth="1.400" />
      </Icon>
      <span className="ml-[18px] w-[190px] shrink-0">English (United States)</span>
      <Icon w={13} h={12}>
        <path d="M6.500 1.500V12M0.500 0.500H5L6.500 2L8 0.500H12.500V10.500H8L6.500 11.500L5 10.500H0.500ZM2 3.500H5M2 5.500H5M2 7.500H5M8 3.500H11M8 5.500H11M8 7.500H11" stroke="#666" />
      </Icon>
      <div className="mt-[1px] ml-[13px] flex h-[21px] w-[38px] shrink-0 items-center justify-center bg-[#c8c8c8]">
        <Icon w={14} h={13}>
          <path d="M0.500 0.500H13.500V12.500H0.500ZM2 2.500H12M2 4.500H12M2 6.500H12M2 8.500H12M2 10.500H12" stroke="#555" />
        </Icon>
      </div>
      <Icon w={14} h={13} className="ml-[12px]">
        <path d="M5 10.500H0.500V0.500H11.500V4M2 2.500H10M2 4.500H8M2 6.500H6M2 8.500H5" stroke="#666" />
        <circle cx="10" cy="8.500" r="4" fill="#777" />
        <path d="M8 7L10 8L9 10M11 6L13 8" stroke="#fff" />
      </Icon>
      <div className="ml-[17px] h-[2px] w-[6px] shrink-0 bg-[#666]" />
      <div className="ml-[4px] flex w-[100px] shrink-0 items-center">
        <div className="h-px w-[48px] bg-[#999]" />
        <div className="h-[11px] w-[4px] bg-[#555]" />
        <div className="h-px w-[48px] bg-[#999]" />
      </div>
      <Icon w={8} h={8} className="ml-[4px]">
        <path d="M0 4H8M4 0V8" stroke="#555" strokeWidth="2" />
      </Icon>
      <span className="ml-[16px] text-[10.8px]">100%</span>
    </div>
  );
}

function WordWindow() {
  return (
    <div className="flex h-[728px] w-[682px] flex-col bg-[#2a579a]">
      <WordTitleBar />
      <WordTabs />
      <Ribbon />
      <WordPage />
      <StatusBar />
    </div>
  );
}

/* ---------- Taskbar ---------- */

function Task({ w, ml, line = false, active = false, children }: { w: string; ml: string; line?: boolean; active?: boolean; children: React.ReactNode }) {
  return (
    <div className={`${w} ${ml} flex h-[40px] shrink-0 items-center justify-center border-b-2 ${line ? "border-[#86a0c8]" : "border-transparent"} ${active ? "bg-[#47546a]" : ""}`}>
      {children}
    </div>
  );
}

function Taskbar() {
  return (
    <div className="flex h-[40px] items-center bg-[#1f2b3b] text-white">
      <Icon w={16} h={16} className="ml-[16px]">
        <path d="M0 2.200L6.500 1.300V7.500H0ZM7.500 1.200L16 0V7.500H7.500ZM0 8.500H6.500V14.700L0 13.800ZM7.500 8.500H16V16L7.500 14.800Z" fill="#fff" />
      </Icon>
      <Icon w={16} h={16} className="ml-[32px]">
        <circle cx="10.500" cy="5.500" r="4.800" stroke="#fff" strokeWidth="1.300" />
        <path d="M7 9L0.500 15.500" stroke="#fff" strokeWidth="1.300" />
      </Icon>
      <Icon w={20} h={14} className="ml-[30px]">
        <path d="M4.500 0.500H15.500V13.500H4.500ZM3 2.500H0.500V11.500H3M17 2.500H19.500V11.500H17" stroke="#fff" />
      </Icon>
      <Icon w={5} h={16} className="ml-[20px]">
        <path d="M0.500 0V16M3.500 0V16" stroke="#4c5a6c" />
      </Icon>
      <Task w="w-[40px]" ml="ml-[16px]">
        <Icon w={21} h={22} className="mt-[2px]">
          <path d="M0 10C2 3 6 0 11 0C17 0 21 4.500 20.500 12.500H6.500C7 18 14 19 19 15.500V20C13 23.500 3 22.500 2.500 14C2.500 10 5 7.500 8 6.500C4.500 7 2 8 0 10ZM6.800 9H14C14 4 7.500 4 6.800 9Z" fill="#0a84e0" fillRule="evenodd" />
        </Icon>
      </Task>
      <Task w="w-[40px]" ml="ml-[8px]">
        <Icon w={24} h={23}>
          <path d="M7.500 6V4Q8 1 11 1Q14 1 14.500 4V6M10 6V3Q11 0.500 14 1Q16.500 1.500 16.500 4V6" stroke="#fff" />
          <path d="M0 6H24L23 21Q22.500 23 21 23H3Q1.500 23 1 21Z" fill="#fff" />
          <path d="M6 9H11.500V14H6Z" fill="#f04e23" />
          <path d="M12.500 9H17.500V14H12.500Z" fill="#7fba00" />
          <path d="M6 15H11.500V20H6Z" fill="#00a3ee" />
          <path d="M12.500 15H17.500V20H12.500Z" fill="#ffb901" />
        </Icon>
      </Task>
      <Task w="w-[40px]" ml="ml-[10px]">
        <Icon w={24} h={24} className="mt-[2px]">
          <rect width="24" height="24" rx="3" fill="#fff" />
          <path d="M8.500 5L12 7.500L8.500 10L5 7.500ZM15.500 5L19 7.500L15.500 10L12 7.500ZM8.500 10L12 12.500L8.500 15L5 12.500ZM15.500 10L19 12.500L15.500 15L12 12.500ZM12 13.500L15.500 16L12 18.500L8.500 16Z" fill="#0f62f4" />
        </Icon>
      </Task>
      <Task w="w-[48px]" ml="ml-[5px]" line active>
        <Icon w={22} h={22} className="mt-[2px]">
          <path d="M12 3H21.500V19H12Z" fill="#fff" stroke="#3b68b0" />
          <path d="M13 6.500H20M13 9.500H20M13 12.500H20M13 15.500H20" stroke="#2a579a" />
          <path d="M0 3L13 0V22L0 19Z" fill="#2a579a" />
          <path d="M2.500 7.500L4.500 14L6.500 8L8.500 14L10.500 7.500" stroke="#fff" strokeWidth="1.500" />
        </Icon>
      </Task>
      <Task w="w-[40px]" ml="ml-[5px]">
        <Icon w={24} h={19} className="mt-[2px]">
          <path d="M0 6L12 0L24 6V19H0Z" fill="#fff" />
          <path d="M2 6.500L22 5.800L11.500 10L18 15.500L9 11Z" fill="#1f2b3b" />
        </Icon>
      </Task>
      <Task w="w-[40px]" ml="ml-[9px]" line>
        <Icon w={22} h={19}>
          <path d="M0 1H8L10 3H21V19H0Z" fill="#f3d26d" />
          <path d="M0 5H22V18H0Z" fill="#fde9a0" />
          <path d="M4 18V11H18V18H14V14H8V18Z" fill="#36b0e8" />
        </Icon>
      </Task>
      <Task w="w-[40px]" ml="ml-[9px]" line>
        <Icon w={22} h={22} className="mt-[2px]">
          <circle cx="11" cy="11" r="11" fill="#fdd24c" />
          <path d="M11 11L1.500 5.500A11 11 0 0 1 20.500 5.500Z" fill="#df4a3d" />
          <path d="M1.500 5.500A11 11 0 0 0 10 22L14.500 13.500L11 11Z" fill="#22a35b" />
          <circle cx="11" cy="11" r="5.200" fill="#fff" />
          <circle cx="11" cy="11" r="4.100" fill="#4a8af4" />
        </Icon>
      </Task>
      <Task w="w-[40px]" ml="ml-[10px]">
        <Icon w={24} h={22}>
          <ellipse cx="11" cy="10" rx="11" ry="6.500" transform="rotate(-25 11 10)" fill="#999" />
          <ellipse cx="13" cy="7" rx="10" ry="6" transform="rotate(-25 13 7)" fill="#f4f4f4" stroke="#d93b3b" strokeWidth="1.600" />
          <path d="M7 8L18 14M15 3L14 14" stroke="#888" strokeWidth="1.300" />
          <ellipse cx="20" cy="14.500" rx="3" ry="2" stroke="#2280c8" strokeWidth="1.600" />
          <ellipse cx="14" cy="18.500" rx="2" ry="3" stroke="#2280c8" strokeWidth="1.600" />
        </Icon>
      </Task>
      <Task w="w-[40px]" ml="ml-[8px]" line>
        <Icon w={18} h={18} className="mt-[2px]">
          <path d="M0 0H18V11L11 18H0Z" fill="#efe69a" />
          <path d="M11 18V11H18Z" fill="#96905a" />
        </Icon>
      </Task>
      <Task w="w-[40px]" ml="ml-[9px]" line>
        <Icon w={24} h={23} className="mt-[2px]">
          <path d="M17 0L23.500 2.500V20.500L17 23L0 18.500L17 20Z" fill="#dd6f2b" />
          <path d="M2 7.500L13 16M2 14.500L13 5V16" stroke="#dd6f2b" strokeWidth="2" />
        </Icon>
      </Task>
      <Icon w={24} h={23} className="ml-[363px]">
        <circle cx="11" cy="11" r="10" fill="#1497dc" stroke="#fff" strokeWidth="1.500" />
        <path d="M7.500 8.500Q7.500 5 11 5Q14.500 5 14.500 8Q14.500 10 11 11.500V13.500M11 15V17.500" stroke="#fff" strokeWidth="2.200" />
        <circle cx="19" cy="17" r="5" fill="#f5b324" />
        <path d="M19 14V20" stroke="#fff" />
      </Icon>
      <Icon w={15} h={15} className="ml-[23px]">
        <circle cx="5" cy="6.500" r="2.500" stroke="#fff" strokeWidth="1.100" />
        <circle cx="10.500" cy="3" r="2.500" stroke="#fff" strokeWidth="1.100" />
        <path d="M0.500 15Q0.500 10 5 10Q8.500 10 8.500 14M8 7Q14 5 14 10.500" stroke="#fff" strokeWidth="1.100" />
      </Icon>
      <Icon w={12} h={8} className="ml-[22px]">
        <path d="M0.500 7L6 1.500L11.500 7" stroke="#fff" strokeWidth="1.300" />
      </Icon>
      <Icon w={15} h={12} className="ml-[10px]">
        <path d="M0.500 4H2.500L6.500 0.500V11.500L2.500 8H0.500ZM9 3.500L14 8.500M14 3.500L9 8.500" stroke="#fff" />
      </Icon>
      <Icon w={16} h={9} className="ml-[10px]">
        <path d="M0.500 0.500H13.500V8.500H0.500ZM14 3H15V6H14" stroke="#fff" />
        <path d="M2 2H5V7H2Z" fill="#fff" />
      </Icon>
      <Icon w={15} h={14} className="ml-[9px]">
        <path d="M3.500 0L7 2.200L3.500 4.400L0 2.200ZM10 0L13.500 2.200L10 4.400L7 2.200ZM3.500 4.400L7 6.600L3.500 8.800L0 6.600ZM10 4.400L13.500 6.600L10 8.800L7 6.600ZM6.500 8L10 10L6.500 12L3.500 10Z" fill="#aaa" />
        <circle cx="10" cy="9.500" r="4.500" fill="#de2b2b" />
        <path d="M8.500 8L11.500 11M11.500 8L8.500 11" stroke="#fff" strokeWidth="1.200" />
      </Icon>
      <Icon w={13} h={13} className="ml-[10px]">
        <path d="M1 12A11 11 0 0 1 12 1" stroke="#8b95a3" strokeWidth="1.200" />
        <path d="M4 12A8 8 0 0 1 12 4M7 12A5 5 0 0 1 12 7M9.500 12A2.500 2.500 0 0 1 12 9.500" stroke="#fff" strokeWidth="1.200" />
      </Icon>
      <div className="ml-[10px] w-[24px] shrink-0 text-[11.3px]">ENG</div>
      <div className="ml-[9px] flex w-[58px] shrink-0 flex-col items-center pb-[2px] text-[11px] leading-[19px]">
        <div>1:08 PM</div>
        <div className="tracking-[-0.1px]">18/12/2017</div>
      </div>
      <div className="relative ml-[15px] h-[24px] w-[24px] shrink-0">
        <Icon w={16} h={17} className="mt-[2px]">
          <path d="M0 0H16V12H9L5 16V12H0Z" fill="#fff" />
          <path d="M3 3.500H13M3 6H13M3 8.500H10" stroke="#1f2b3b" />
        </Icon>
        <div className="absolute top-[9px] left-[7px] flex h-[16px] w-[16px] items-center justify-center rounded-full border border-[#8390a0] bg-[#46566b] text-[10px]">5</div>
      </div>
      <div className="ml-[12px] h-[40px] w-px bg-[#66707d]" />
    </div>
  );
}

export default function App() {
  return (
    <div className="h-[768px] w-[1366px] overflow-hidden font-['Open_Sans','Noto_Sans',sans-serif] whitespace-nowrap">
      <div className="flex">
        <ChromeWindow />
        <WordWindow />
      </div>
      <Taskbar />
    </div>
  );
}
